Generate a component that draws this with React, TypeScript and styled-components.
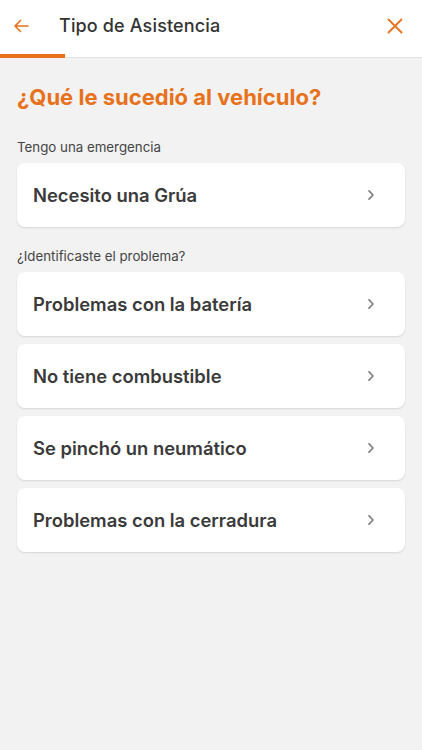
import React from 'react';
import styled, { createGlobalStyle } from 'styled-components';

const orange = '#e8711c';

const GlobalStyle = createGlobalStyle`
    html, body {
        margin: 0;
        padding: 0;
        background: #f2f2f2;
        font-family: "Inter", "Noto Sans", sans-serif;
    }
    #root {
        min-height: 750px;
        background: #f2f2f2;
    }
`;

const Header = styled.header`
    position: relative;
    height: 51px;
    background: #fff;
    border-bottom: 1px solid #e2e2e2;
    display: flex;
    align-items: center;
    padding: 0 17px 6px 11px;
`;

const IconButton = styled.button`
    border: 0;
    background: none;
    padding: 0;
    width: 20px;
    height: 20px;
    display: flex;
    align-items: center;
    justify-content: center;
    cursor: pointer;
`;

const HeaderTitle = styled.h1`
    flex: 1;
    margin: 0 0 0 28px;
    font-size: 18px;
    font-weight: 500;
    color: #333;
    letter-spacing: 0.15px;
`;

const Progress = styled.div`
    position: absolute;
    left: 0;
    bottom: -1px;
    width: 65px;
    height: 4px;
    background: ${orange};
`;

const Content = styled.main`
    padding: 26px 17px 20px;
`;

const Title = styled.h2`
    margin: 0 0 29px;
    font-size: 22px;
    font-weight: 700;
    color: ${orange};
`;

const SectionLabel = styled.p`
    margin: 0 0 8px;
    font-size: 13.3px;
    color: #444;
`;

const List = styled.div`
    display: flex;
    flex-direction: column;
    gap: 8px;
    margin-bottom: 21px;
`;

const Card = styled.button`
    height: 64px;
    border: 0;
    border-radius: 8px;
    background: #fff;
    box-shadow: 0 1px 2px rgba(0, 0, 0, 0.12);
    display: flex;
    align-items: center;
    justify-content: space-between;
    padding: 0 30px 0 16px;
    font-family: inherit;
    font-size: 18.4px;
    font-weight: 600;
    color: #3a3a3a;
    text-align: left;
    cursor: pointer;
`;

const Chevron = () => (
    <svg width="8" height="12" viewBox="0 0 8 12" fill="none" stroke="#808080" strokeWidth="1.7" strokeLinecap="round" strokeLinejoin="round">
        <path d="M2 1.8 L6 6 L2 10.2" />
    </svg>
);

const sections = [
    { label: 'Tengo una emergencia', items: ['Necesito una Grúa'] },
    {
        label: '¿Identificaste el problema?',
        items: ['Problemas con la batería', 'No tiene combustible', 'Se pinchó un neumático', 'Problemas con la cerradura'],
    },
];

const App = () => {
    return (
        <>
            <GlobalStyle />
            <Header>
                <IconButton aria-label="volver">
                    <svg width="16" height="14" viewBox="0 0 16 14" fill="none" stroke={orange} strokeWidth="1.6" strokeLinecap="round" strokeLinejoin="round">
                        <path d="M15 7 H2 M7.5 1.5 L2 7 L7.5 12.5" />
                    </svg>
                </IconButton>
                <HeaderTitle>Tipo de Asistencia</HeaderTitle>
                <IconButton aria-label="cerrar">
                    <svg width="16" height="16" viewBox="0 0 16 16" fill="none" stroke={orange} strokeWidth="1.8" strokeLinecap="round">
                        <path d="M1.5 1.5 L14.5 14.5 M14.5 1.5 L1.5 14.5" />
                    </svg>
                </IconButton>
                <Progress />
            </Header>
            <Content>
                <Title>¿Qué le sucedió al vehículo?</Title>
                {sections.map((s) => (
                    <section key={s.label}>
                        <SectionLabel>{s.label}</SectionLabel>
                        <List>
                            {s.items.map((item) => (
                                <Card key={item}>
                                    {item}
                                    <Chevron />
                                </Card>
                            ))}
                        </List>
                    </section>
                ))}
            </Content>
        </>
    );
};

export default App;
